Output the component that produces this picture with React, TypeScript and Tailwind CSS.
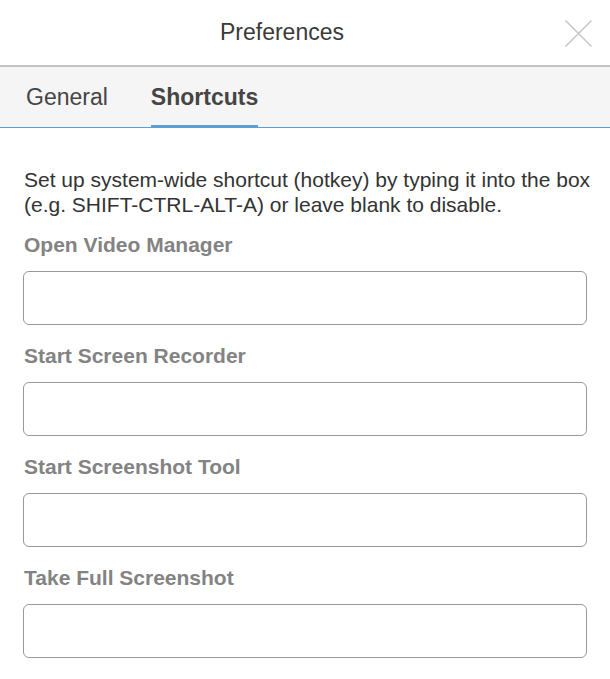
const shortcuts = [
  "Open Video Manager",
  "Start Screen Recorder",
  "Start Screenshot Tool",
  "Take Full Screenshot",
];

export default function App() {
  return (
    <div className="w-[610px] h-[679px] bg-white font-['Liberation_Sans',Arial,sans-serif] overflow-hidden">
      <div className="relative h-[67px] flex items-center justify-center pr-[46px] border-b-2 border-[#c4c4c4]">
        <span className="text-[23px] text-[#3a3a3a]">Preferences</span>
        <button className="absolute right-[17px] top-[19px] w-[29px] h-[29px]">
          <svg viewBox="0 0 29 29" className="w-full h-full" fill="none" stroke="#c8c8c8" strokeWidth="1.6">
            <path d="M1.5 1.5 L27.5 27.5 M27.5 1.5 L1.5 27.5" />
          </svg>
        </button>
      </div>
      <div className="h-[61px] bg-[#f5f5f5] border-b border-[#5b9fd5] flex items-stretch pl-[26px] gap-[43px]">
        <div className="flex items-center text-[23px] text-[#454545]">General</div>
        <div className="relative flex items-center text-[23px] font-bold text-[#454545] border-b-[3px] border-[#5b9fd5] -mb-px pt-[3px]">
          Shortcuts
        </div>
      </div>
      <div className="px-[23px] pt-[39px]">
        <p className="text-[21px] leading-[25px] text-[#333] mb-[15px] pl-px -mr-[12px]">
          Set up system-wide shortcut (hotkey) by typing it into the box (e.g. SHIFT-CTRL-ALT-A) or leave blank to disable.
        </p>
        <div className="flex flex-col gap-[18px]">
          {shortcuts.map((s) => (
            <div key={s}>
              <label className="block text-[21px] leading-[25px] font-bold text-[#838383] mb-[14px] pl-px">{s}</label>
              <input className="block w-full h-[54px] rounded-[6px] border-[1.5px] border-[#999] outline-none px-3" />
            </div>
          ))}
        </div>
      </div>
    </div>
  );
}
